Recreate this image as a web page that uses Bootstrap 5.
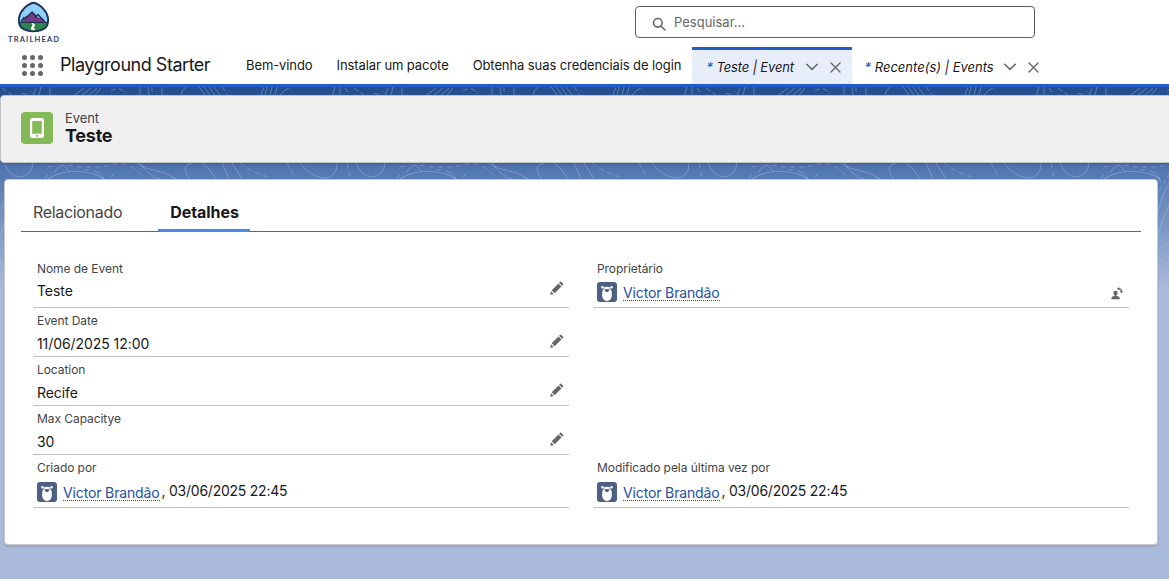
<!DOCTYPE html>
<html lang="pt-BR">
<head>
<meta charset="utf-8">
<meta name="viewport" content="width=device-width, initial-scale=1">
<title>Teste | Event</title>
<link rel="stylesheet" href="https://cdn.jsdelivr.net/npm/bootstrap@5.3.0/dist/css/bootstrap.min.css">
<style>
  body { font-family: Inter, "Liberation Sans", sans-serif; font-size: 14px; line-height: 20px; color: #181818; background: #a9b9d9; height: 579px; overflow: hidden; }
  svg { display: block; flex: none; }
  .topbar { height: 84px; }
  .brand-row { height: 47px; }
  .brand-logo { margin: 1px 0 0 8px; }
  .search-box { width: 400px; height: 32px; margin: 6px 134px 0 0; border: 1px solid #5c5c5c; border-radius: 4px; color: #666; font-size: 13px; padding-left: 16px; }
  .search-hint { margin-left: 7px; }
  .nav-row { height: 37px; font-size: 13px; letter-spacing: -.09px; }
  .launcher { margin-left: 22px; width: 38px; }
  .app-name { width: 174px; font-size: 18px; letter-spacing: -.48px; padding-bottom: 2px; }
  .nav-row .nav-link { padding: 0 12px; color: #181818; white-space: nowrap; line-height: 37px; height: 37px; }
  .work-tab { height: 37px; flex: none; white-space: nowrap; font-style: italic; letter-spacing: -.14px; border-top: 3px solid transparent; padding-bottom: 2px; }
  .work-tab.active { background: #e8eef9; border-top-color: #205cca; }
  .work-tab b { color: #205cca; font-weight: 500; }
  .work-tab svg + svg { margin-left: 12px; }
  .tab-record { width: 160px; margin-left: -1px; padding: 0 11px 0 14px; }
  .tab-list { width: 198px; padding: 0 11px 0 12px; letter-spacing: 0; }
  .stage { height: 495px; border-top: 3px solid #205cca; background: linear-gradient(#234d90 0, #26508f 8px, #4c72ae 76px, #587db5 92px, #a9b9d9 200px); position: relative; }
  .contours { position: absolute; left: 0; top: 0; }
  .record-head { position: relative; height: 68px; margin: 0 -4px 0 0; background: #f0f0f0; border: 1px solid #c4c4c4; border-radius: 4px; box-shadow: 0 2px 2px rgba(0,0,0,.12); padding-left: 20px; }
  .record-icon { width: 32px; height: 32px; margin-bottom: 2px; background: #84b957; border-radius: 4px; }
  .record-title { margin: 0 0 3px 12px; }
  .kind { font-size: 13px; line-height: 17px; color: #444; letter-spacing: -.1px; }
  .record-name { font-size: 18px; line-height: 18px; font-weight: 700; letter-spacing: -.25px; }
  .record-body { position: relative; margin: 16px 11px 0 4px; height: 366px; background: #fff; border: 1px solid #c9c9c9; border-radius: 4px; box-shadow: 0 2px 2px rgba(0,0,0,.1); padding: 0 16px; }
  .record-tabs { height: 52px; border-bottom: 1px solid #666; font-size: 16px; letter-spacing: -.32px; }
  .record-tabs a { color: #444; text-decoration: none; padding: 22px 12px 0; height: 52px; }
  .record-tabs a + a { margin-left: 24px; width: 92px; color: #181818; font-weight: 700; letter-spacing: -.06px; border-bottom: 3px solid #4a86f0; }
  .fields { display: grid; grid-template-columns: 536px 536px; grid-template-rows: 53px 49px 49px 49px 53px; column-gap: 24px; margin: 23px 0 0 12px; }
  .field { border-bottom: 1px solid #c0c0c0; padding: 4px 4px 0; }
  .field-first { padding-top: 5px; }
  .field-label { font-size: 12px; line-height: 18px; color: #444; letter-spacing: -.06px; }
  .field-value { height: 20px; line-height: 20px; margin-top: 5px; letter-spacing: -.07px; }
  .field-value.editable { margin-top: 4px; }
  .field-first .field-value { margin-top: 4px; }
  .field-first .field-value.editable { margin-top: 3px; }
  .pen { margin: 0 1px 0 0; }
  .owner { margin: 5px 1px 0 0; }
  .user-link { color: #2450a4; text-decoration: none; border-bottom: 1px dotted #2450a4; line-height: 15px; letter-spacing: -.14px; margin: 3px 2px 0 6px; height: 16px; }
  .stamp { margin-top: -1px; letter-spacing: -.24px; }
</style>
</head>
<body>
<svg width="0" height="0" class="position-absolute">
  <defs>
    <symbol id="pencil" viewBox="0 0 14 14"><path fill="#666" d="M10.1.8q.5-.5 1 0l2 2q.5.5 0 1l-1 1-3-3zM8.500 2.400l3 3-6.800 6.900-3-3zM1 10.200l2.800 2.800-3 .7q-.6.1-.5-.5z"/></symbol>
    <symbol id="down" viewBox="0 0 12 8"><path d="M.7 1.200 6 6.400l5.300-5.200" fill="none" stroke="#666" stroke-width="1.500" stroke-linecap="round"/></symbol>
    <symbol id="cross" viewBox="0 0 11 11"><path d="m1 1 9 9M10 1l-9 9" fill="none" stroke="#666" stroke-width="1.400" stroke-linecap="round"/></symbol>
    <symbol id="bear" viewBox="0 0 20 20"><rect width="20" height="20" rx="3" fill="#4d5f82"/><path fill="#fff" d="M6.200 6q3.800-2.600 7.600 0l1 5q1 7-4.800 8.200Q4.200 18 5.200 11z"/><circle cx="5.400" cy="5.300" r="1.300" fill="#fff"/><circle cx="14.600" cy="5.300" r="1.300" fill="#fff"/><path fill="#4d5f82" d="M7.800 7.600q2.200-1 4.400 0 .4 2.400-2.200 2.600-2.600-.2-2.200-2.600z"/><circle cx="6.900" cy="7" r=".7" fill="#4d5f82"/><circle cx="13.100" cy="7" r=".7" fill="#4d5f82"/></symbol>
  </defs>
</svg>

<header class="topbar bg-white">
  <div class="brand-row d-flex justify-content-between align-items-start">
    <svg class="brand-logo" width="52" height="43" viewBox="0 0 52 43">
      <path d="M25.500 1.800C33 3.500 39 10.500 40 17q.6 6-2.200 9.500Q33 30.400 25.500 30.400T13.200 26.500Q10.400 23 11 17C12 10.500 18 3.500 25.500 1.800Z" fill="#90d0fe"/>
      <path d="m13 22 5-7 3-1 4-3 6 6 2-1 5 5v2H13z" fill="#753b83"/>
      <path d="m13 20.500 3.500-4.500M17 18l7-7 4.500 5M27 16.500l3-3 6.500 7" fill="none" stroke="#18304f" stroke-width="1.400"/>
      <path d="M11.300 21.500h28.400q-.1 4-3 6.200-4 2.500-11.200 2.500t-11.200-2.500q-2.900-2.200-3-6.200z" fill="#2e844a"/>
      <path d="M24 22.200q4 1.300 2.200 3-2 1 .5 3.800h-3q-1-2.800 1-4 .8-1-.7-2.800z" fill="#fff" stroke="#fff" stroke-width="1"/>
      <path d="M11.500 21.400h28" stroke="#18304f" stroke-width="1"/>
      <path d="M25.500 1.800C33 3.500 39 10.500 40 17q.6 6-2.200 9.500Q33 30.400 25.500 30.400T13.200 26.500Q10.400 23 11 17C12 10.500 18 3.500 25.500 1.800Z" fill="none" stroke="#1b335c" stroke-width="1.900"/>
      <text x="0" y="40.800" textLength="51" font-family="Lato" font-weight="700" font-size="7.500" fill="#2a4271">TRAILHEAD</text>
    </svg>
    <div class="search-box d-flex align-items-center">
      <svg width="15" height="15" viewBox="0 0 15 15" class="mt-1" fill="none" stroke="#666" stroke-width="1.600" stroke-linecap="round"><circle cx="5.800" cy="5.800" r="4.300"/><path d="m9.200 9.200 3.800 3.800"/></svg>
      <span class="search-hint">Pesquisar...</span>
    </div>
  </div>
  <nav class="nav-row d-flex align-items-center">
    <div class="launcher"><svg width="22" height="22" viewBox="0 0 22 22" fill="#666"><circle cx="2.500" cy="2.500" r="2.500"/><circle cx="10.500" cy="2.500" r="2.500"/><circle cx="18.500" cy="2.500" r="2.500"/><circle cx="2.500" cy="10.500" r="2.500"/><circle cx="10.500" cy="10.500" r="2.500"/><circle cx="18.500" cy="10.500" r="2.500"/><circle cx="2.500" cy="18.500" r="2.500"/><circle cx="10.500" cy="18.500" r="2.500"/><circle cx="18.500" cy="18.500" r="2.500"/></svg></div>
    <span class="app-name">Playground Starter</span>
    <a class="nav-link" href="#">Bem-vindo</a>
    <a class="nav-link" href="#">Instalar um pacote</a>
    <a class="nav-link" href="#">Obtenha suas credenciais de login</a>
    <div class="work-tab tab-record active d-flex align-items-center"><span><b>*</b> Teste | Event</span><svg class="ms-auto" width="12" height="8"><use href="#down"/></svg><svg width="11" height="11"><use href="#cross"/></svg></div>
    <div class="work-tab tab-list d-flex align-items-center"><span><b>*</b> Recente(s) | Events</span><svg class="ms-auto" width="12" height="8"><use href="#down"/></svg><svg width="11" height="11"><use href="#cross"/></svg></div>
  </nav>
</header>

<main class="stage">
  <svg class="contours" width="1169" height="200">
    <defs>
      <pattern id="topo" width="352" height="200" patternUnits="userSpaceOnUse">
        <g fill="none" stroke="#b5cae8" stroke-opacity=".38" stroke-width="1">
          <path d="M33 8l3-7M39 8l2-8M50 0v8M75 8l9-7M82 8l9-7M89 8l8-7M95 8l6-7M140 0v8M148 0l1 8M162 0v8M181 8q1-5 5-8M199 0l6 8M204 0l6 8M209 0l6 8M214 0l6 8M261 8l3-8M265 8l2-8M270 8l2-8M275 8l2-8M280 8q4-5 9-7M333 8l2-8M340 8V0"/>
          <path d="M2 1l10 7M22 6q5 3 8-2M111 4q8-6 15 3M152 0v8M222 0l6 8M345 1l4 6" stroke-dasharray="5 3"/>
          <path d="M4 76Q10 90 20 90Q32 88 33 76M48 92Q62 82 85 85Q97 87 104 92M55 85Q59 78 63 78Q66 79 69 85M137 76Q148 83 154 83Q166 85 176 92M140 76Q150 90 160 92M190 92Q179 78 193 76M202 76Q210 81 216 92M222 76L229 92M232 76L242 92M300 76Q310 90 325 91Q337 90 337 76"/>
          <path d="M48 80l9-2M44 91l8-6M68 78Q92 83 117 77Q132 76 144 91M84 83q14-1 19 9M240 76Q250 85 272 91M287 76L295 91M347 76L350 91" stroke-dasharray="5 4"/>
          <path d="M101 131Q103 114 114 94M101 151Q106 132 114 116M101 164q5-2 12-9M101 181q9 1 14 11M1 125l5-16M0 150q4-9 5-20M0 174l5 7"/>
          <path d="M98 84q6 4 7 14M103 104l11-18M103 173h7" stroke-dasharray="5 3"/>
        </g>
      </pattern>
    </defs>
    <rect width="1169" height="200" fill="url(#topo)"/>
  </svg>
  <div class="pt-2">
    <section class="record-head d-flex align-items-center">
      <div class="record-icon d-flex align-items-center justify-content-center">
        <svg width="14" height="20" viewBox="0 0 14 20"><path fill="#fff" fill-rule="evenodd" d="M2.500 0h9Q14 0 14 2.500v15q0 2.500-2.500 2.500h-9Q0 20 0 17.500v-15Q0 0 2.500 0zM2.200 3v12.800h9.600V3zM6 17h2v1.700H6z"/></svg>
      </div>
      <div class="record-title"><div class="kind">Event</div><h1 class="record-name m-0">Teste</h1></div>
    </section>
    <section class="record-body">
      <div class="record-tabs d-flex"><a href="#">Relacionado</a><a href="#">Detalhes</a></div>
      <div class="fields">
        <div class="field field-first"><div class="field-label">Nome de Event</div><div class="field-value editable d-flex justify-content-between"><span>Teste</span><svg class="pen" width="14" height="14"><use href="#pencil"/></svg></div></div>
        <div class="field field-first"><div class="field-label">Proprietário</div><div class="field-value d-flex"><svg width="20" height="20"><use href="#bear"/></svg><a class="user-link" href="#">Victor Brandão</a>
          <svg class="ms-auto owner" width="13" height="13" viewBox="0 0 13 13" fill="#666"><circle cx="4.500" cy="6" r="2.200"/><path d="M3.600 7h1.800v2q3.300.5 3.300 2.200v1.100H.4v-1.100Q.4 9.500 3.600 9z"/><path d="M7 1.700q3.300-.1 3.500 3" fill="none" stroke="#666" stroke-width="1.300"/><path d="M8.200 0v3.500L6 1.800zM8.700 4.200h3.600l-1.800 2z"/></svg></div></div>
        <div class="field"><div class="field-label">Event Date</div><div class="field-value editable d-flex justify-content-between"><span>11/06/2025 12:00</span><svg class="pen" width="14" height="14"><use href="#pencil"/></svg></div></div><div></div>
        <div class="field"><div class="field-label">Location</div><div class="field-value editable d-flex justify-content-between"><span>Recife</span><svg class="pen" width="14" height="14"><use href="#pencil"/></svg></div></div><div></div>
        <div class="field"><div class="field-label">Max Capacitye</div><div class="field-value editable d-flex justify-content-between"><span>30</span><svg class="pen" width="14" height="14"><use href="#pencil"/></svg></div></div><div></div>
        <div class="field"><div class="field-label">Criado por</div><div class="field-value d-flex"><svg width="20" height="20"><use href="#bear"/></svg><a class="user-link" href="#">Victor Brandão</a><span class="stamp">, 03/06/2025 22:45</span></div></div>
        <div class="field"><div class="field-label">Modificado pela última vez por</div><div class="field-value d-flex"><svg width="20" height="20"><use href="#bear"/></svg><a class="user-link" href="#">Victor Brandão</a><span class="stamp">, 03/06/2025 22:45</span></div></div>
      </div>
    </section>
  </div>
</main>
<script src="https://cdn.jsdelivr.net/npm/bootstrap@5.3.0/dist/js/bootstrap.bundle.min.js"></script>
</body>
</html>
